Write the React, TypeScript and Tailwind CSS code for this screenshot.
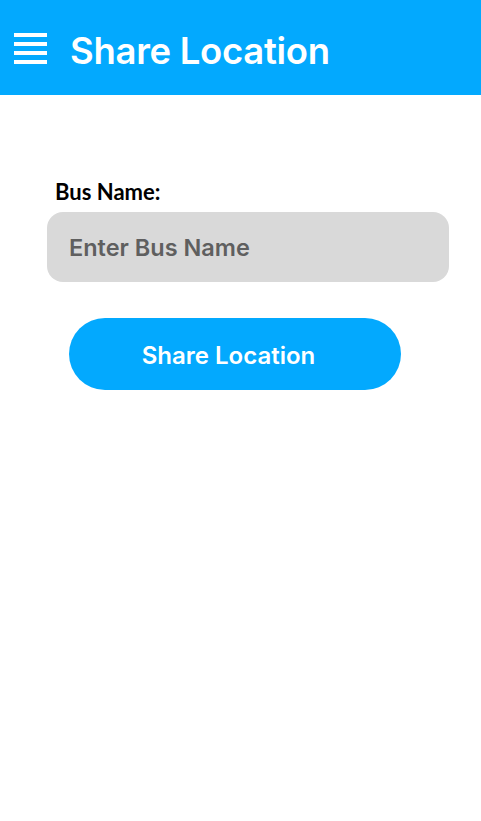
export default function App() {
  return (
    <div className="min-h-screen bg-white font-['Inter',sans-serif]">
      <header className="flex h-[95px] items-center bg-[#03a9fe] pl-[14px]">
        <button className="mt-[2px] flex w-[33px] flex-col gap-[5px]" aria-label="Menu">
          <span className="block h-[4px] w-full bg-white" />
          <span className="block h-[4px] w-full bg-white" />
          <span className="block h-[4px] w-full bg-white" />
          <span className="block h-[4px] w-full bg-white" />
        </button>
        <h1 className="ml-[23px] mt-[8px] text-[36.5px] font-semibold tracking-[-0.3px] text-white">Share Location</h1>
      </header>

      <main className="pl-[47px] pr-[32px] pt-[85px]">
        <label className="block pl-2 font-['Lato',sans-serif] text-[22px] font-bold leading-[24px] text-black">
          Bus Name:
        </label>
        <input
          type="text"
          placeholder="Enter Bus Name"
          className="mt-[8px] h-[70px] w-full rounded-[16px] bg-[#d9d9d9] px-[22px] text-[23.5px] font-semibold text-[#5f5f5f] placeholder:text-[#5f5f5f] outline-none"
        />
        <button className="ml-[22px] mt-[36px] h-[72px] w-[332px] rounded-full bg-[#03a9fe] pr-[13px] pt-[3px] text-[24px] font-semibold text-white">
          Share Location
        </button>
      </main>
    </div>
  );
}
